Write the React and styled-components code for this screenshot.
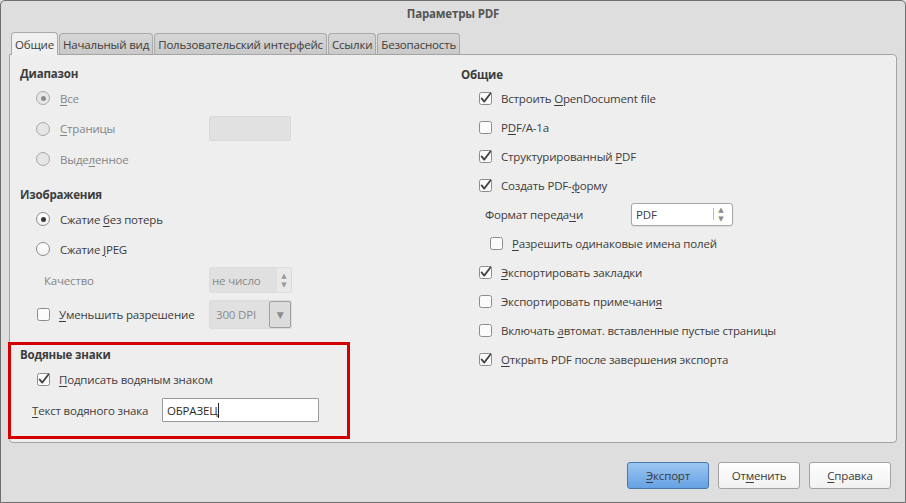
import React from "react";
import styled, { createGlobalStyle, css } from "styled-components";

const Global = createGlobalStyle`
  html, body {
    margin: 0;
    padding: 0;
    background: #dedede;
  }
  body {
    font-family: "Open Sans", "DejaVu Sans", sans-serif;
    font-size: 11.5px;
    letter-spacing: -0.18px;
    color: #3c3c3c;
  }
  u {
    text-underline-offset: 2px;
  }
`;

const Window = styled.div`
  box-sizing: border-box;
  width: 906px;
  height: 503px;
  border: 1px solid #6f6f6f;
  border-radius: 5px 5px 0 0;
  background: #dedede;
  display: flex;
  flex-direction: column;
`;

const TitleBar = styled.div`
  height: 23px;
  display: flex;
  align-items: center;
  justify-content: center;
  font-weight: 700;
  color: #555;
  padding-top: 1px;
`;

const Body = styled.div`
  padding: 6px 8px 0 8px;
  display: flex;
  flex-direction: column;
`;

const Tabs = styled.div`
  display: flex;
  align-items: flex-end;
  padding-left: 2px;
  height: 23px;
  gap: 1px;
`;

const Tab = styled.div`
  box-sizing: border-box;
  height: ${(p) => (p.$active ? "23px" : "21px")};
  padding: 0 3px;
  display: flex;
  align-items: center;
  border: 1px solid #a9a9a9;
  border-bottom: none;
  border-radius: 4px 4px 0 0;
  background: ${(p) => (p.$active ? "#f0f0f0" : "linear-gradient(#d6d6d6, #c9c9c9)")};
  color: #3c3c3c;
  position: relative;
  z-index: ${(p) => (p.$active ? 2 : 0)};
  margin-bottom: ${(p) => (p.$active ? "-1px" : "0")};
`;

const Panel = styled.div`
  box-sizing: border-box;
  height: 389px;
  border: 1px solid #a4a4a4;
  border-radius: 0 4px 4px 4px;
  background: #eeeeee;
  display: grid;
  grid-template-columns: 441px 1fr;
  padding-top: 10px;
`;

const Column = styled.div`
  display: flex;
  flex-direction: column;
  padding-left: 10px;
  padding-top: ${(p) => p.$top || 0}px;
`;

const Heading = styled.div`
  height: 18px;
  line-height: 18px;
  font-weight: 700;
  color: #3c3c3c;
  margin-top: ${(p) => p.$gap || 0}px;
  padding-top: ${(p) => p.$pad || 0}px;
`;

const Row = styled.div`
  display: flex;
  align-items: center;
  height: ${(p) => p.$h || 30}px;
  padding-left: ${(p) => p.$indent || 0}px;
  color: ${(p) => (p.$disabled ? "#858585" : "#3c3c3c")};
`;

const Label = styled.span`
  width: ${(p) => (p.$w ? p.$w + "px" : "auto")};
  flex-shrink: 0;
  white-space: nowrap;
`;

const RadioMark = styled.span`
  box-sizing: border-box;
  width: 14px;
  height: 14px;
  border-radius: 50%;
  border: 1px solid ${(p) => (p.$disabled ? "#a8a8a8" : "#8a8a8a")};
  background: ${(p) => (p.$disabled ? "#e6e6e6" : "linear-gradient(#ffffff, #f2f2f2)")};
  margin-right: 10px;
  display: flex;
  align-items: center;
  justify-content: center;
  flex-shrink: 0;
  &::after {
    content: "";
    display: ${(p) => (p.$checked ? "block" : "none")};
    width: 5px;
    height: 5px;
    border-radius: 50%;
    background: ${(p) => (p.$disabled ? "#8c8c8c" : "#3a3a3a")};
  }
`;

const CheckSvg = styled.svg`
  flex-shrink: 0;
  margin-right: 9px;
  overflow: visible;
`;

function Check({ checked }) {
  return (
    <CheckSvg width="13" height="13" viewBox="0 0 13 13">
      <rect x="0.5" y="0.5" width="12" height="12" rx="2" fill="#fbfbfb" stroke="#8c8c8c" />
      {checked && (
        <path d="M2.6 6.4 L5.2 9.6 L11.6 1.2" fill="none" stroke="#444" strokeWidth="1.8" strokeLinecap="round" strokeLinejoin="round" />
      )}
    </CheckSvg>
  );
}

const fieldBase = css`
  box-sizing: border-box;
  display: flex;
  align-items: center;
  border-radius: 2px;
  flex-shrink: 0;
`;

const PagesField = styled.div`
  ${fieldBase};
  width: 82px;
  height: 25px;
  background: #e1e1e1;
  border: 1px solid #d9d9d9;
`;

const Spin = styled.div`
  ${fieldBase};
  width: 83px;
  height: 26px;
  background: #e0e0e0;
  border: 1px solid #dcdcdc;
  color: #8a8a8a;
  padding-left: 2px;
`;

const Arrows = styled.div`
  width: 14px;
  height: 100%;
  display: flex;
  flex-direction: column;
  align-items: center;
  justify-content: center;
  gap: 2px;
  font-size: 7px;
  line-height: 7px;
  letter-spacing: 0;
  color: ${(p) => p.$color || "#9a9a9a"};
  background: ${(p) => p.$bg || "transparent"};
  margin-left: ${(p) => (p.$push ? "auto" : "0")};
`;

const Combo = styled.div`
  ${fieldBase};
  width: 83px;
  height: 29px;
  background: #e0e0e0;
  border: 1px solid #dcdcdc;
  color: #8a8a8a;
  padding-left: 6px;
`;

const ComboButton = styled.div`
  box-sizing: border-box;
  margin-left: auto;
  width: 22px;
  height: 100%;
  border: 1px solid #a0a0a0;
  border-radius: 2px;
  background: #dcdcdc;
  display: flex;
  align-items: center;
  justify-content: center;
  font-size: 9px;
  color: #8c8c8c;
`;

const Select = styled.div`
  ${fieldBase};
  width: 102px;
  height: 23px;
  background: #ffffff;
  border: 1px solid #a6a6a6;
  border-radius: 3px;
  padding-left: 4px;
  padding-right: 4px;
  box-shadow: 0 1px 1px rgba(0, 0, 0, 0.08);
`;

const SelectSep = styled.span`
  width: 1px;
  height: 12px;
  background: #bdbdbd;
  margin-left: auto;
`;

const TextInput = styled.div`
  ${fieldBase};
  width: 157px;
  height: 24px;
  background: #ffffff;
  border: 1px solid #9a9a9a;
  border-radius: 1px;
  padding-left: 4px;
  color: #2c2c2c;
`;

const Caret = styled.span`
  display: inline-block;
  width: 1px;
  height: 15px;
  background: #222;
`;

const Highlight = styled.div`
  margin-left: -12px;
  width: 342px;
  box-sizing: border-box;
  border: 3px solid #d40000;
  padding: 0 0 11px 9px;
  margin-top: 10px;
  display: flex;
  flex-direction: column;
`;

const Footer = styled.div`
  display: flex;
  justify-content: flex-end;
  gap: 9px;
  padding: 19px 6px 0 0;
`;

const Button = styled.div`
  box-sizing: border-box;
  width: 82px;
  height: 27px;
  display: flex;
  align-items: center;
  justify-content: center;
  border-radius: 3px;
  border: 1px solid ${(p) => (p.$primary ? "#4a78ad" : "#a3a3a3")};
  background: ${(p) =>
    p.$primary ? "linear-gradient(#9cc6f1, #66a2e4)" : "linear-gradient(#ffffff, #f1f1f1)"};
  color: #3c3c3c;
`;

function Radio({ checked, disabled, width, children }) {
  return (
    <>
      <RadioMark $checked={checked} $disabled={disabled} />
      <Label $w={width}>{children}</Label>
    </>
  );
}

export default function App() {
  return (
    <>
      <Global />
      <Window>
        <TitleBar>Параметры PDF</TitleBar>
        <Body>
          <Tabs>
            <Tab $active>Общие</Tab>
            <Tab>Начальный вид</Tab>
            <Tab>Пользовательский интерфейс</Tab>
            <Tab>Ссылки</Tab>
            <Tab>Безопасность</Tab>
          </Tabs>
          <Panel>
            <Column>
              <Heading>Диапазон</Heading>
              <Row $indent={16} $disabled>
                <Radio checked disabled>
                  <u>В</u>се
                </Radio>
              </Row>
              <Row $indent={16} $h={31} $disabled>
                <Radio disabled width={149}>
                  <u>С</u>траницы
                </Radio>
                <PagesField />
              </Row>
              <Row $indent={16} $disabled>
                <Radio disabled>
                  Выде<u>л</u>енное
                </Radio>
              </Row>

              <Heading $gap={12}>Изображения</Heading>
              <Row $indent={16}>
                <Radio checked>
                  Сжатие <u>б</u>ез потерь
                </Radio>
              </Row>
              <Row $indent={16}>
                <Radio>
                  Сжатие <u>J</u>PEG
                </Radio>
              </Row>
              <Row $indent={24} $h={32} $disabled>
                <Label $w={165}>Качество</Label>
                <Spin>
                  не число
                  <Arrows $push $bg="#e9e9e9">
                    <span>▲</span>
                    <span>▼</span>
                  </Arrows>
                </Spin>
              </Row>
              <Row $indent={17} $h={36}>
                <Check />
                <Label $w={150}>
                  <u>У</u>меньшить разрешение
                </Label>
                <Combo>
                  300 DPI
                  <ComboButton>▼</ComboButton>
                </Combo>
              </Row>

              <Highlight>
                <Heading $pad={1}>Водяные знаки</Heading>
                <Row $indent={17} $h={31}>
                  <Check checked />
                  <Label>
                    <u>П</u>одписать водяным знаком
                  </Label>
                </Row>
                <Row $indent={12}>
                  <Label $w={130}>
                    <u>Т</u>екст водяного знака
                  </Label>
                  <TextInput>
                    ОБРАЗЕЦ
                    <Caret />
                  </TextInput>
                </Row>
              </Highlight>
            </Column>

            <Column $top={0.5}>
              <Heading>Общие</Heading>
              <Row $indent={18} $h={29}>
                <Check checked />
                <Label>
                  Встроить <u>O</u>penDocument file
                </Label>
              </Row>
              <Row $indent={18} $h={29}>
                <Check />
                <Label>
                  P<u>D</u>F/A-1a
                </Label>
              </Row>
              <Row $indent={18} $h={29}>
                <Check checked />
                <Label>
                  Структурированный <u>P</u>DF
                </Label>
              </Row>
              <Row $indent={18} $h={29}>
                <Check checked />
                <Label>
                  Создать PDF-<u>ф</u>орму
                </Label>
              </Row>
              <Row $indent={24} $h={29}>
                <Label $w={146}>
                  Формат переда<u>ч</u>и
                </Label>
                <Select>
                  PDF
                  <SelectSep />
                  <Arrows $color="#8a8a8a">
                    <span>▲</span>
                    <span>▼</span>
                  </Arrows>
                </Select>
              </Row>
              <Row $indent={29} $h={29}>
                <Check />
                <Label>
                  <u>Р</u>азрешить одинаковые имена полей
                </Label>
              </Row>
              <Row $indent={18} $h={29}>
                <Check checked />
                <Label>
                  <u>Э</u>кспортировать закладки
                </Label>
              </Row>
              <Row $indent={18} $h={29}>
                <Check />
                <Label>
                  Экспортировать примечани<u>я</u>
                </Label>
              </Row>
              <Row $indent={18} $h={29}>
                <Check />
                <Label>
                  Включать <u>а</u>втомат. вставленные пустые страницы
                </Label>
              </Row>
              <Row $indent={18} $h={29}>
                <Check checked />
                <Label>
                  <u>О</u>ткрыть PDF после завершения экспорта
                </Label>
              </Row>
            </Column>
          </Panel>
          <Footer>
            <Button $primary>
              <span>
                <u>Э</u>кспорт
              </span>
            </Button>
            <Button>
              <span>
                От<u>м</u>енить
              </span>
            </Button>
            <Button>
              <span>
                <u>С</u>правка
              </span>
            </Button>
          </Footer>
        </Body>
      </Window>
    </>
  );
}
